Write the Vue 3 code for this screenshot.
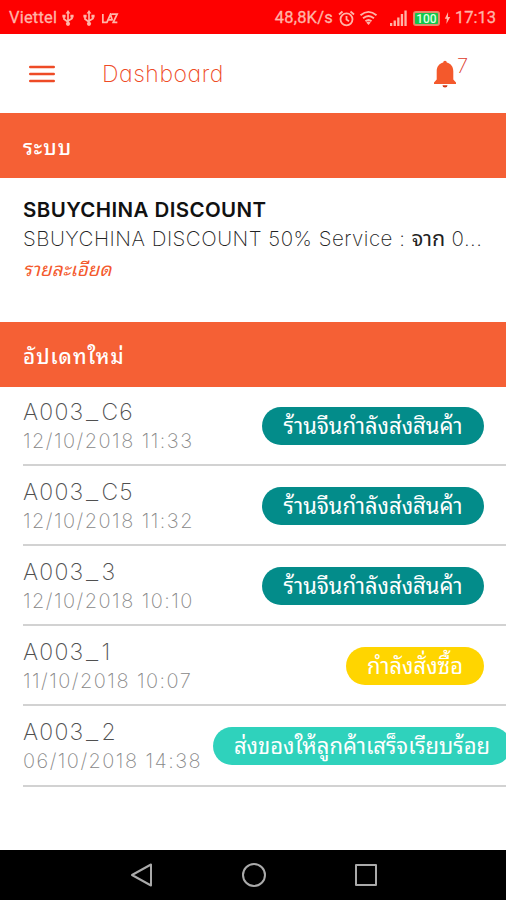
<script setup>
const items = [
  { prefix: 'A003', suffix: 'C6', date: '12/10/2018 11:33', status: 'ร้านจีนกำลังส่งสินค้า', kind: 'shipping' },
  { prefix: 'A003', suffix: 'C5', date: '12/10/2018 11:32', status: 'ร้านจีนกำลังส่งสินค้า', kind: 'shipping' },
  { prefix: 'A003', suffix: '3', date: '12/10/2018 10:10', status: 'ร้านจีนกำลังส่งสินค้า', kind: 'shipping' },
  { prefix: 'A003', suffix: '1', date: '11/10/2018 10:07', status: 'กำลังสั่งซื้อ', kind: 'ordering' },
  { prefix: 'A003', suffix: '2', date: '06/10/2018 14:38', status: 'ส่งของให้ลูกค้าเสร็จเรียบร้อย', kind: 'done' },
]
</script>

<template>
  <div class="screen">
    <div class="status">
      <span class="carrier">Viettel</span>
      <svg v-for="n in 2" :key="n" class="usb" viewBox="0 0 12 16">
        <path d="M6 2v12M2 6v3l4 3M10 5.500v3l-4 2.500" fill="none" stroke="currentColor" stroke-width="1.700" />
        <path d="M6 0l2.400 3.400H3.600zM.4 4.800h3.200v2.800H.4zM8.400 4.800h3.200v2.800H8.400z" fill="currentColor" />
        <circle cx="6" cy="13.800" r="2.100" fill="currentColor" />
      </svg>
      <svg class="laz" viewBox="0 0 18 12">
        <path d="M1.200 1v9.200H6M5.500 10.500L9.500 1.500l2 6.500M7 7.500h5M10.500 1.300h6.300L12.500 10.300h4.500" fill="none" stroke="currentColor" stroke-width="1.900" />
      </svg>
      <span class="speed">48,8K/s</span>
      <svg class="alarm" viewBox="0 0 17 17">
        <g fill="none" stroke="currentColor" stroke-width="1.800">
          <circle cx="8.500" cy="9.300" r="6" />
          <path d="M8.500 6v3.600l2.500 1.600M1 4.500L4.500 1.500M16 4.500L12.500 1.500" />
        </g>
      </svg>
      <svg class="wifi" viewBox="0 0 20 17">
        <g fill="none" stroke="currentColor" stroke-width="2">
          <path d="M1.500 5.500Q10-1.500 18.500 5.500M4.200 8.800Q10 4 15.800 8.800M6.800 12Q10 9.200 13.200 12" />
        </g>
        <path d="M7.700 13.200Q10 11.500 12.300 13.200L10 16z" fill="currentColor" />
      </svg>
      <svg class="signal" viewBox="0 0 17 16">
        <path d="M0 13h2.300v3H0zM3.600 10.500h2.300V16H3.600zM7.200 7.500h2.300V16H7.200zM10.800 4h2.300v12h-2.300zM14.400.5h2.300V16h-2.300z" fill="currentColor" />
      </svg>
      <span class="battery">100</span>
      <svg class="bolt" viewBox="0 0 6 12">
        <path d="M3.600 0L.3 6.800h2L1.900 12l3.800-7H3.500z" fill="currentColor" />
      </svg>
      <span class="clock">17:13</span>
    </div>

    <header class="bar">
      <svg class="menu" viewBox="0 0 26 18">
        <path d="M1.200 2h23.600M1.200 9h23.600M1.200 16h23.600" stroke="currentColor" stroke-width="2.400" stroke-linecap="round" />
      </svg>
      <h1 class="title"><span>Dashboard</span></h1>
      <svg class="bell" viewBox="0 0 24 28">
        <path d="M10.200 2.600a1.800 1.800 0 0 1 3.600 0C18 3.600 20.300 7 20.300 11.500V19.500L23 22.500V24H1v-1.500l2.700-3V11.500C3.700 7 6 3.600 10.200 2.600z" fill="#f4592c" />
        <path d="M9.500 25.300h5a2.500 2.200 0 0 1-5 0z" fill="#d03818" />
      </svg>
      <span class="count">7</span>
    </header>

    <h2 class="band"><span>ระบบ</span></h2>
    <section class="notice">
      <div class="name"><span>SBUYCHINA DISCOUNT</span></div>
      <div class="desc"><span>SBUYCHINA DISCOUNT 50% Service : </span><span class="th">จาก</span><span> 0...</span></div>
      <div class="more"><span>รายละเอียด</span></div>
    </section>

    <h2 class="band"><span>อัปเดทใหม่</span></h2>
    <ul class="list">
      <li v-for="item in items" :key="item.prefix + item.suffix" class="row">
        <div class="info">
          <div class="code">{{ item.prefix }}<span class="dash">_</span>{{ item.suffix }}</div>
          <div class="date">{{ item.date }}</div>
        </div>
        <div class="pill" :class="item.kind"><span>{{ item.status }}</span></div>
      </li>
    </ul>

    <nav class="nav">
      <svg viewBox="0 0 24 24"><path d="M21 1.500v21L2 12z" /></svg>
      <svg viewBox="0 0 24 24"><circle cx="12" cy="12" r="11" /></svg>
      <svg viewBox="0 0 24 24"><rect x="2" y="2" width="20" height="20" /></svg>
    </nav>
  </div>
</template>

<style>
body { margin: 0; background: #fff; }
</style>

<style scoped>
.screen {
  width: 506px; height: 900px; overflow: hidden;
  display: flex; flex-direction: column;
  background: #fff;
  font-family: Inter, "Noto Sans Thai Looped", "Noto Looped Thai", Loma, Waree, "Noto Sans Thai", sans-serif;
  font-feature-settings: "cv11";
  font-weight: 300;
}
h1, h2, ul { margin: 0; padding: 0; list-style: none; font-weight: inherit; }
span { white-space: pre; }
.status {
  height: 34px; flex: none; box-sizing: border-box; padding: 2px 10px 0 9px;
  display: flex; align-items: center;
  background: #fe0000; color: #ffb4a8;
  font: 400 16.500px/32px Roboto, sans-serif;
}
.status svg { flex: none; }
.carrier { letter-spacing: 0.200px; -webkit-text-stroke: 0.300px; }
.usb { width: 12px; height: 16px; margin-left: 5px; }
.usb + .usb { margin-left: 9px; }
.laz { width: 18px; height: 11px; margin-left: 6px; }
.speed { margin-left: auto; letter-spacing: 0.200px; -webkit-text-stroke: 0.300px; }
.clock { -webkit-text-stroke: 0.300px; }
.alarm { width: 17px; height: 17px; margin-left: 5px; }
.wifi { width: 19px; height: 16px; margin-left: 4px; }
.signal { width: 17px; height: 16px; margin-left: 12px; }
.battery {
  width: 23px; height: 11px; margin-left: 6px;
  border: 2px solid #e58a6a; border-radius: 3px;
  background: #12c74a; color: #dfffe0;
  font-size: 12px; line-height: 12px; text-align: center; font-weight: 500;
}
.bolt { width: 7px; height: 12px; margin: 0 4px 0 4px; }
.bar {
  height: 79px; flex: none; box-sizing: border-box; padding: 0 39px 0 29px;
  display: flex; align-items: center;
  color: #ee4b26;
}
.menu { width: 26px; height: 18px; }
.title { margin-left: 47px; font-size: 23px; line-height: 30px; font-weight: 200; letter-spacing: 0.550px; }
.bell { width: 24px; height: 28px; margin-left: auto; }
.count { font-size: 20px; line-height: 20px; margin: -15px 0 0; width: 10px; color: #dd3b2a; font-weight: 200; }
.band {
  height: 65px; flex: none; padding-left: 23px;
  display: flex; align-items: center;
  background: #f56035; color: #fff;
  font-size: 20.500px; font-weight: 500; letter-spacing: 1px;
}
.notice {
  height: 144px; flex: none; padding: 19px 0 0 23px; box-sizing: border-box;
  color: #222;
}
.name { font-size: 20.500px; line-height: 25px; font-weight: 600; color: #111; letter-spacing: 0.400px; }
.desc { font-size: 20.500px; line-height: 32px; font-weight: 200; letter-spacing: 0.500px; }
.th { font-size: 21.500px; font-weight: 400; letter-spacing: 0; }
.more { font-size: 18.700px; line-height: 30px; font-style: italic; font-weight: 400; letter-spacing: 0.200px; color: #f4592c; }
.list { flex: 1; padding-left: 23px; }
.row {
  height: 80.100px; box-sizing: border-box; border-bottom: 2px solid #d2d2d2;
  display: flex; justify-content: space-between; align-items: flex-start;
  padding-right: 22px;
}
.row:first-child { height: 79.200px; }
.row:not(:first-child) .info { padding-top: 12px; }
.info { padding-top: 11px; flex: none; }
.code { font-size: 23px; line-height: 29px; font-weight: 200; letter-spacing: 1.200px; color: #505050; }
.dash { display: inline-block; letter-spacing: 0; margin: 0 4px 0 3px; transform: scaleX(1.200); }
.date { font-size: 20px; line-height: 28px; font-weight: 200; letter-spacing: 1.450px; color: #888; }
.pill {
  flex: none; box-sizing: border-box; height: 38px; margin-top: 20px; padding: 0 21px;
  border-radius: 19px; color: #fff; background: #038c8a;
  font-size: 22px; line-height: 38px; font-weight: 400;
  display: flex; justify-content: center;
}
.row:not(:first-child) .pill { margin-top: 21px; }
.shipping { width: 222px; }
.ordering { width: 138px; background: #ffd500; }
.done { width: 298px; margin-right: -27px; background: #2fd2bc; }
.nav {
  height: 50px; flex: none; box-sizing: border-box; padding-left: 1px; background: #000;
  display: flex; justify-content: center; align-items: center; gap: 88px;
}
.nav svg { width: 24px; height: 24px; fill: none; stroke: #aaa; stroke-width: 2; stroke-linejoin: round; }
</style>
